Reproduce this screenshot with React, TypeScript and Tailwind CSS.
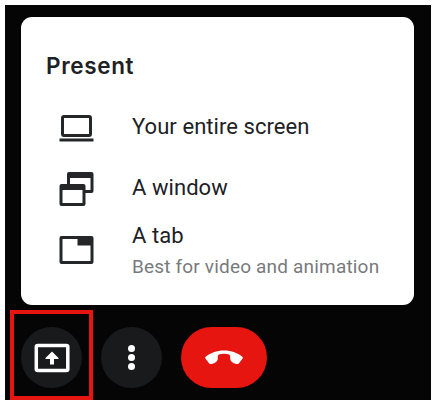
import type { ReactNode } from "react";

function LaptopIcon() {
  return (
    <svg width="36" height="30" viewBox="0 0 36 30" fill="none" stroke="#242628" className="block">
      <rect x="3.500" y="2.500" width="28" height="19" rx="1.500" strokeWidth="3" />
      <path d="M0.500 26H34.500" strokeWidth="3" />
    </svg>
  );
}

function WindowsIcon() {
  return (
    <svg width="36" height="36" viewBox="0 0 36 36" className="-mt-1 block">
      <path
        fill="#242628"
        fillRule="evenodd"
        d="M10 1h22.500a2 2 0 0 1 2 2v17a2 2 0 0 1-2 2H25v-3h6.500V7H11v6H8V3a2 2 0 0 1 2-2z"
      />
      <path
        fill="#242628"
        fillRule="evenodd"
        d="M2.500 13H24.500a2 2 0 0 1 2 2v18a2 2 0 0 1-2 2H2.500a2 2 0 0 1-2-2V15a2 2 0 0 1 2-2zM3.500 19v13H23.500V19z"
      />
    </svg>
  );
}

function TabIcon() {
  return (
    <svg width="36" height="30" viewBox="0 0 36 30" className="mt-3 block">
      <path
        fill="#242628"
        fillRule="evenodd"
        d="M2.500 1H32.500a2 2 0 0 1 2 2v24a2 2 0 0 1-2 2H2.500a2 2 0 0 1-2-2V3a2 2 0 0 1 2-2zM3.500 4v22H31.500V10.500H18.500V4z"
      />
    </svg>
  );
}

function PresentIcon() {
  return (
    <svg width="36" height="30" viewBox="0 0 36 30" className="block">
      <rect x="2.300" y="2.500" width="31.500" height="25" rx="1.500" fill="none" stroke="#fff" strokeWidth="3.500" />
      <path d="M18 8.500l6.500 6.500v1H20V21.500H16V16H11.500v-1z" fill="#fff" />
    </svg>
  );
}

function HangUpIcon() {
  return (
    <svg width="40" height="18" viewBox="0 0 40 18" className="block">
      <path
        d="M20 1.500C12.500 1.500 6 4 1.600 7.800Q.8 8.600 1.400 9.500L5 14.200Q6 15.400 7.600 15L10.200 14.200Q13.600 12.600 13.800 9.500V6.900Q14.200 4.800 20 4.800T26.200 6.900V9.500Q26.400 12.600 29.800 14.200L32.400 15Q34 15.400 35 14.200L38.600 9.500Q39.200 8.600 38.400 7.800C34 4 27.500 1.500 20 1.500z"
        fill="#fff"
      />
    </svg>
  );
}

function Option({ icon, label, note, className }: { icon: ReactNode; label: string; note?: string; className: string }) {
  return (
    <button className={`flex w-full items-start text-left ${className}`}>
      <span className="w-[73px] shrink-0">{icon}</span>
      <span className="flex flex-col whitespace-nowrap">
        <span className="text-[22px] leading-[26px] tracking-[0.06px] text-[#202124]">{label}</span>
        {note && <span className="mt-1.5 text-[19px] leading-[24px] tracking-[0.18px] text-[#777a7d]">{note}</span>}
      </span>
    </button>
  );
}

export default function App() {
  return (
    <div className="h-[405px] w-[436px] bg-white p-[5px] font-['Roboto',sans-serif]">
      <div className="h-[395px] w-[426px] bg-[#050505] pt-3">
        <section className="ml-4 h-[288px] w-[393px] rounded-[11px] bg-white pl-6 pt-[33px]">
          <h1 className="pl-px font-['Inter',sans-serif] text-[22.5px] leading-[31px] font-semibold tracking-[0.65px] text-[#202124]">
            Present
          </h1>
          <div className="pl-[14px]">
            <Option className="mt-[33px] h-[61px]" icon={<LaptopIcon />} label="Your entire screen" />
            <Option className="h-[48px]" icon={<WindowsIcon />} label="A window" />
            <Option className="h-[60px]" icon={<TabIcon />} label="A tab" note="Best for video and animation" />
          </div>
        </section>
        <nav className="flex h-[95px] items-start pl-[5px] pt-[5px]">
          <div className="flex h-[90px] w-[83px] items-start border-4 border-[#e6150f] pl-[7px] pt-[13px]">
            <button className="flex size-[61px] items-center justify-center rounded-full bg-[#191a1c]">
              <PresentIcon />
            </button>
          </div>
          <button className="mt-[17px] ml-2 flex size-[61px] flex-col items-center justify-center gap-[2px] rounded-full bg-[#191a1c]">
            <span className="size-[7px] rounded-full bg-white" />
            <span className="size-[7px] rounded-full bg-white" />
            <span className="size-[7px] rounded-full bg-white" />
          </button>
          <button className="mt-[17px] ml-[19px] flex h-[61px] w-[86px] items-center justify-center rounded-full bg-[#e6150f]">
            <HangUpIcon />
          </button>
        </nav>
      </div>
    </div>
  );
}
